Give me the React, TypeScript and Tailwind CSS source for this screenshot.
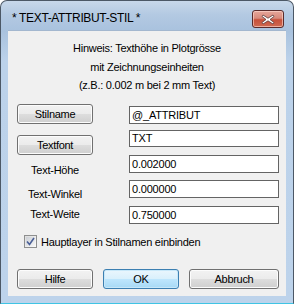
import React from "react";

const font = { fontFamily: '"Liberation Sans", Arial, sans-serif' };

function Btn({ label, w, def }: { label: string; w: string; def?: boolean }) {
  return (
    <div
      className={
        "h-[20px] rounded-[3px] border flex items-center justify-center text-[11px] tracking-[-0.3px] text-black shrink-0 " +
        w +
        (def
          ? " border-[#3c7fb1] bg-[linear-gradient(#eaf6fd_0%,#d9f0fc_50%,#bee6fd_51%,#a7d9f5_100%)] shadow-[inset_0_0_0_1px_#c8e8f9]"
          : " border-[#707070] bg-[linear-gradient(#f2f2f2_0%,#ebebeb_50%,#dddddd_51%,#cfcfcf_100%)] shadow-[inset_0_0_0_1px_#fcfcfc]")
      }
    >
      {label}
    </div>
  );
}

function Field({ value, h = "h-[18px]" }: { value: string; h?: string }) {
  return (
    <div
      className={
        "w-[150px] ml-auto mr-[7px] border border-[#646464] bg-white text-[11px] tracking-[-0.2px] text-black pl-[2px] flex items-center shrink-0 " +
        h
      }
    >
      {value}
    </div>
  );
}

export default function App() {
  return (
    <div className="w-[294px] h-[304px]" style={font}>
      <div className="w-[294px] h-[304px] rounded-t-[7px] border-x border-t border-[#4c5866] border-b border-b-[#3fc4e4] bg-[linear-gradient(180deg,#c8d8ea_0px,#b3c9e2_14px,#a9c2de_30px,#bcd2ea_60px,#bdd3eb_100%)] flex flex-col">
        {/* title bar */}
        <div className="h-[29px] flex items-start shrink-0">
          <div className="ml-[11px] mt-[10px] text-[12px] tracking-[-0.35px] text-black leading-[14px]">
            * TEXT-ATTRIBUT-STIL *
          </div>
          <div className="ml-auto mr-[9px] mt-[9px] w-[32px] h-[18px] rounded-[3px] border border-[#5a2b2b] bg-[linear-gradient(#e6a69a_0%,#d88a7c_45%,#c7503a_55%,#cf6a52_100%)] shadow-[inset_0_0_0_1px_rgba(255,220,210,0.6)] flex items-center justify-center">
            <svg width="14" height="11" viewBox="0 0 14 11">
              <path
                d="M2 1 L7 4.2 L12 1 L13 2.5 L9 5.5 L13 8.5 L12 10 L7 6.8 L2 10 L1 8.5 L5 5.5 L1 2.5 Z"
                fill="#ffffff"
                stroke="#5b3a3a"
                strokeWidth="0.8"
                strokeLinejoin="round"
              />
            </svg>
          </div>
        </div>
        {/* client area */}
        <div className="mx-[7px] h-[266px] bg-[#f0f0f0] border-t border-[#a3b7cf] flex flex-col text-black">
          <div className="h-[73px] pt-[8px] text-center text-[11px] tracking-[-0.25px] leading-[18.5px]">
            <div>Hinweis: Texthöhe in Plotgrösse</div>
            <div>mit Zeichnungseinheiten</div>
            <div>(z.B.: 0.002 m bei 2 mm Text)</div>
          </div>
          {/* Row A */}
          <div className="h-[26px] flex items-start pl-[9px]">
            <Btn label="Stilname" w="w-[76px]" />
            <div className="mt-[2px] ml-auto">
              <Field value="@_ATTRIBUT" />
            </div>
          </div>
          {/* Row B */}
          <div className="h-[25px] flex items-start pl-[9px]">
            <div className="mt-[5px]">
              <Btn label="Textfont" w="w-[76px]" />
            </div>
            <div className="ml-auto">
              <Field value="TXT" h="h-[17px]" />
            </div>
          </div>
          {/* Row C */}
          <div className="h-[25px] flex items-start pl-[9px]">
            <div className="w-[76px] mt-[8px] text-center text-[11px] tracking-[-0.25px] leading-[14px]">Text-Höhe</div>
            <div className="ml-auto">
              <Field value="0.002000" />
            </div>
          </div>
          {/* Row D */}
          <div className="h-[26px] flex items-start pl-[9px]">
            <div className="w-[76px] mt-[7px] text-center text-[11px] tracking-[-0.25px] leading-[14px]">Text-Winkel</div>
            <div className="ml-auto">
              <Field value="0.000000" />
            </div>
          </div>
          {/* Row E */}
          <div className="h-[29px] flex items-start pl-[9px]">
            <div className="w-[76px] mt-[1px] text-center text-[11px] tracking-[-0.25px] leading-[14px]">Text-Weite</div>
            <div className="ml-auto">
              <Field value="0.750000" />
            </div>
          </div>
          {/* checkbox */}
          <div className="h-[13px] flex items-center pl-[16px]">
            <div className="w-[13px] h-[13px] border border-[#8e8f8f] bg-[linear-gradient(135deg,#dcdcdc,#fbfbfb)] p-[1px] shrink-0">
              <div className="w-full h-full bg-[linear-gradient(135deg,#cbcfd5,#f6f6f6)] flex items-center justify-center">
                <svg width="9" height="9" viewBox="0 0 9 9">
                  <path d="M1 4.5 L3.5 7.5 L8 1" fill="none" stroke="#4a5f97" strokeWidth="1.6" />
                </svg>
              </div>
            </div>
            <div className="ml-[4px] text-[11px] tracking-[-0.25px] leading-[14px]">Hauptlayer in Stilnamen einbinden</div>
          </div>
          {/* bottom buttons */}
          <div className="mt-[21px] h-[20px] flex pl-[9px]">
            <Btn label="Hilfe" w="w-[76px]" />
            <div className="ml-[10px]">
              <Btn label="OK" w="w-[76px]" def />
            </div>
            <div className="ml-[10px]">
              <Btn label="Abbruch" w="w-[90px]" />
            </div>
          </div>
        </div>
      </div>
    </div>
  );
}
